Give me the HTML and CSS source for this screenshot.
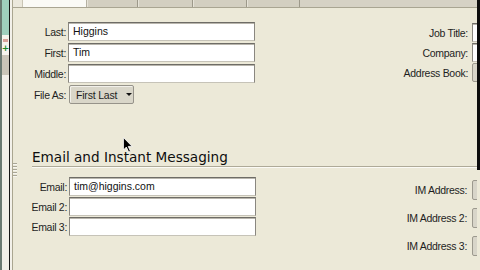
FILE: index.html
```html
<!DOCTYPE html>
<html>
<head>
<meta charset="utf-8">
<link rel="stylesheet" href="styles.css">
</head>
<body>
<div class="screen">
  <div class="side">
    <div class="side-strip">
      <div class="s-teal"></div>
      <div class="s-white"><span class="s-red"></span><span class="s-plus">+</span></div>
      <div class="s-gray"></div>
      <div class="s-rest"></div>
    </div>
    <div class="side-gap"></div>
  </div>

  <div class="main">
    <div class="tabs">
      <div class="tab-lead"></div>
      <div class="tab active w65"></div>
      <div class="tab w51"></div>
      <div class="tab w55"></div>
      <div class="tab w54"></div>
      <div class="tab w53"></div>
      <div class="tab-fill"></div>
    </div>

    <div class="form">
      <section class="top">
        <div class="grid-left">
          <label class="lbl">Last:</label>
          <div class="field">Higgins</div>
          <label class="lbl">First:</label>
          <div class="field">Tim</div>
          <label class="lbl">Middle:</label>
          <div class="field"></div>
          <label class="lbl">File As:</label>
          <div class="cell"><div class="combo">First Last <span class="caret"></span></div></div>
        </div>
        <div class="grid-right">
          <label class="lbl">Job Title:</label>
          <div class="cut"><div class="field wide"></div></div>
          <label class="lbl">Company:</label>
          <div class="cut"><div class="field wide"></div></div>
          <label class="lbl">Address Book:</label>
          <div class="cut"><div class="btn wide"></div></div>
        </div>
      </section>

      <section class="email">
        <div class="grip"></div>
        <div class="email-body">
          <h2 class="heading">Email and Instant Messaging</h2>
          <div class="email-rows">
            <div class="grid-email">
              <label class="lbl">Email:</label>
              <div class="field">tim@higgins.com</div>
              <label class="lbl">Email 2:</label>
              <div class="field"></div>
              <label class="lbl">Email 3:</label>
              <div class="field"></div>
            </div>
            <div class="grid-im">
              <label class="lbl">IM Address:</label>
              <div class="cut"><div class="btn wide"></div></div>
              <label class="lbl">IM Address 2:</label>
              <div class="cut"><div class="btn wide"></div></div>
              <label class="lbl">IM Address 3:</label>
              <div class="cut"><div class="btn wide"></div></div>
            </div>
          </div>
        </div>
      </section>
    </div>
  </div>

  <div class="edge"></div>

  <svg class="cursor" width="10" height="16" viewBox="0 0 12 19">
    <path d="M0.5 0.5 L0.5 15.5 L4 12 L6.8 18 L9 17 L6.3 11.2 L11 11.2 Z" fill="#000" stroke="#fff" stroke-width="1"/>
  </svg>
</div>
</body>
</html>
```

FILE: styles.css
```css
html, body {
  margin: 0;
  padding: 0;
}
body {
  width: 480px;
  height: 270px;
  overflow: hidden;
  background: #ece9d8;
  font-family: "Liberation Sans", Arial, sans-serif;
  font-size: 10.5px;
  color: #1e1e1e;
}
.screen {
  position: relative;
  display: flex;
  width: 480px;
  height: 270px;
  overflow: hidden;
}

/* left strip */
.side {
  display: flex;
  width: 13px;
  flex: none;
}
.side-strip {
  width: 7px;
  border-left: 2px solid #6a7a72;
  border-right: 1px solid #151515;
  display: flex;
  flex-direction: column;
}
.s-teal { height: 35px; background: #9fcfbd; }
.s-white {
  height: 20px;
  background: #f6f4ee;
  display: flex;
  flex-direction: column;
  align-items: center;
}
.s-red {
  width: 5px;
  height: 3px;
  margin-top: 4px;
  background: #d9a29a;
}
.s-plus {
  margin-top: 3px;
  font: bold 9px/7px "DejaVu Sans", sans-serif;
  color: #1f8a2a;
}
.s-gray { height: 20px; background: #c9c5b8; }
.s-rest { flex: 1; background: #f1efe8; }
.side-gap {
  width: 2px;
  background: #f3f1ea;
  border-right: 1px solid #aaa690;
}

/* main */
.main {
  flex: 1;
  min-width: 0;
  overflow: hidden;
  display: flex;
  flex-direction: column;
}
.tabs {
  height: 7px;
  display: flex;
  border-bottom: 1px solid #a9a592;
  flex: none;
}
.tab-lead { width: 9px; background: #ebe8dc; }
.tab {
  box-sizing: border-box;
  height: 7px;
  background: #d3cfc1;
  border-right: 1px solid #9d998a;
  border-left: 1px solid #e6e3d8;
}
.tab.active {
  background: #fafaf6;
  border-left: 1px solid #c9c5b5;
  border-right: 1px solid #b5b1a2;
}
.w65 { width: 65px; }
.w51 { width: 51px; }
.w55 { width: 55px; }
.w54 { width: 54px; }
.w53 { width: 53px; }
.tab-fill { flex: 1; background: #d6d2c5; }

.form {
  padding-top: 14px;
  display: flex;
  flex-direction: column;
}
.top {
  display: flex;
  justify-content: space-between;
  align-items: flex-start;
}
.grid-left {
  display: grid;
  grid-template-columns: 53px 187px;
  grid-auto-rows: 19px;
  column-gap: 2px;
  row-gap: 2px;
}
.grid-right {
  display: grid;
  grid-template-columns: auto 5px;
  grid-auto-rows: 19px;
  column-gap: 4px;
  row-gap: 1px;
  margin-top: 1px;
}
.lbl {
  display: flex;
  align-items: center;
  justify-content: flex-end;
  white-space: nowrap;
  letter-spacing: -0.3px;
}
.field {
  box-sizing: border-box;
  height: 19px;
  background: #fff;
  border-top: 1px solid #6e6c66;
  border-left: 1px solid #8a8780;
  border-right: 1px solid #8a8780;
  border-bottom: 1px solid #c6c3b8;
  box-shadow: inset 0 1px 0 #b9b6ad;
  padding: 0 4px;
  line-height: 17px;
  font-size: 10.5px;
  color: #111;
  white-space: nowrap;
}
.cut {
  overflow: hidden;
}
.field.wide, .btn.wide {
  width: 40px;
}
.btn {
  box-sizing: border-box;
  height: 19px;
  background: #d8d5c9;
  border: 1px solid #9c998e;
  border-radius: 2px;
}
.cell { display: flex; }
.combo {
  box-sizing: border-box;
  margin-left: 1px;
  width: 65px;
  height: 19px;
  background: #d9d6c9;
  border: 1px solid #96938a;
  border-radius: 2px;
  box-shadow: inset 1px 1px 0 #f2f0ea;
  display: flex;
  align-items: center;
  padding-left: 6px;
  white-space: nowrap;
  letter-spacing: -0.2px;
}
.caret {
  margin-left: 9px;
  width: 0;
  height: 0;
  border-left: 3px solid transparent;
  border-right: 3px solid transparent;
  border-top: 3px solid #111;
}

/* email section */
.email {
  margin-top: 46px;
  display: flex;
}
.grip {
  width: 4px;
  height: 15px;
  margin-top: 13px;
  flex: none;
  background: repeating-linear-gradient(to bottom, #a9a696 0 1px, #f7f6f0 1px 2px, transparent 2px 3px);
}
.email-body {
  flex: 1;
  display: flex;
  flex-direction: column;
}
.heading {
  margin: 0 0 0 15px;
  font: normal 13.6px/15px "DejaVu Sans", Verdana, sans-serif;
  color: #0e0e0e;
  border-bottom: 1px solid #aeaa98;
  box-shadow: 0 1px 0 #fbfaf5;
  padding-bottom: 1px;
}
.email-rows {
  margin-top: 10px;
  display: flex;
  justify-content: space-between;
  align-items: flex-start;
}
.grid-email {
  display: grid;
  grid-template-columns: 50px 187px;
  grid-auto-rows: 19px;
  column-gap: 2px;
  row-gap: 1px;
}
.grid-im {
  display: grid;
  grid-template-columns: auto 5px;
  grid-auto-rows: 20px;
  column-gap: 5px;
  row-gap: 8px;
  margin-top: 3px;
}
.grid-im .btn { height: 20px; }

/* right dark edge */
.edge {
  width: 3px;
  height: 170px;
  flex: none;
  background: #0d0d0d;
}

.cursor {
  position: absolute;
  left: 123px;
  top: 137px;
}
```
